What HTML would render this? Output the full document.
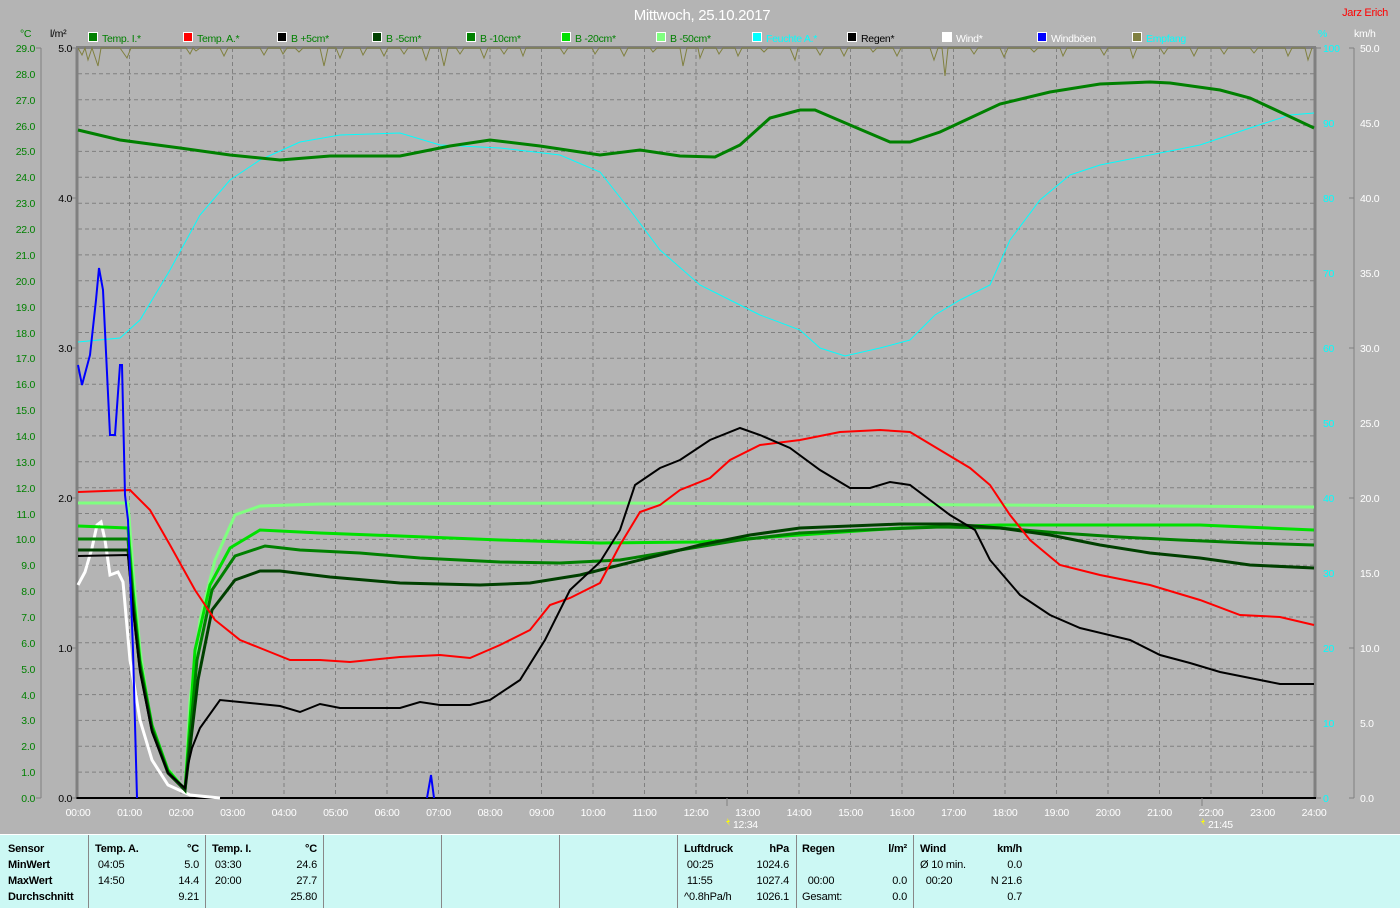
<!DOCTYPE html>
<html><head><meta charset="utf-8"><style>
body{margin:0;background:#b4b4b4;width:1400px;height:907px;overflow:hidden;font-family:"Liberation Sans",sans-serif}
svg{position:absolute;left:0;top:0}
.tb{position:absolute;left:0;top:834px;width:1400px;height:73px;background:#ccf8f4;border-top:1px solid #fff}
.c{position:absolute;font:bold 11px "Liberation Sans",sans-serif;color:#000;top:0;letter-spacing:-0.2px}
.c div{height:16px;line-height:16px;white-space:pre}
.n{font-weight:normal}
.sep{position:absolute;top:0;width:1px;height:73px;background:#888}
</style></head><body>
<svg width="1400" height="907" viewBox="0 0 1400 907" font-family="Liberation Sans, sans-serif" font-size="10.5" letter-spacing="-0.3">
<text x="702" y="20" fill="#fff" font-size="15" text-anchor="middle">Mittwoch, 25.10.2017</text>
<text x="1388" y="16" fill="#f00" font-size="11" text-anchor="end">Jarz Erich</text>
<text x="20" y="37" fill="#008000">°C</text><text x="50" y="37" fill="#000">l/m²</text>
<text x="1318" y="37" fill="#0ff">%</text><text x="1354" y="37" fill="#fff">km/h</text>
<g stroke="#fff" stroke-width="1">
<rect x="88.5" y="32.5" width="9" height="9" fill="#008000"/><rect x="183.5" y="32.5" width="9" height="9" fill="#f00"/>
<rect x="277.5" y="32.5" width="9" height="9" fill="#000"/><rect x="372.5" y="32.5" width="9" height="9" fill="#004000"/>
<rect x="466.5" y="32.5" width="9" height="9" fill="#008000"/><rect x="561.5" y="32.5" width="9" height="9" fill="#00e000"/>
<rect x="656.5" y="32.5" width="9" height="9" fill="#80ff80"/><rect x="752.5" y="32.5" width="9" height="9" fill="#0ff"/>
<rect x="847.5" y="32.5" width="9" height="9" fill="#000"/><rect x="942.5" y="32.5" width="9" height="9" fill="#fff"/>
<rect x="1037.5" y="32.5" width="9" height="9" fill="#00f"/><rect x="1132.5" y="32.5" width="9" height="9" fill="#808040"/>
</g>
<g>
<text x="102" y="42" fill="#008000">Temp. I.*</text><text x="197" y="42" fill="#008000">Temp. A.*</text>
<text x="291" y="42" fill="#008000">B +5cm*</text><text x="386" y="42" fill="#008000">B -5cm*</text>
<text x="480" y="42" fill="#008000">B -10cm*</text><text x="575" y="42" fill="#008000">B -20cm*</text>
<text x="670" y="42" fill="#008000">B -50cm*</text><text x="766" y="42" fill="#0ff">Feuchte A.*</text>
<text x="861" y="42" fill="#000">Regen*</text><text x="956" y="42" fill="#fff">Wind*</text>
<text x="1051" y="42" fill="#fff">Windböen</text><text x="1146" y="42" fill="#0ff">Empfang</text>
</g>
<path stroke="#808080" stroke-dasharray="4,3" fill="none" d="M78 772.1H1314M78 746.3H1314M78 720.4H1314M78 694.6H1314M78 668.7H1314M78 642.8H1314M78 617H1314M78 591.1H1314M78 565.2H1314M78 539.4H1314M78 513.5H1314M78 487.7H1314M78 461.8H1314M78 435.9H1314M78 410.1H1314M78 384.2H1314M78 358.3H1314M78 332.5H1314M78 306.6H1314M78 280.8H1314M78 254.9H1314M78 229H1314M78 203.2H1314M78 177.3H1314M78 151.4H1314M78 125.6H1314M78 99.7H1314M78 73.8H1314
M129.5 48V798M181 48V798M232.5 48V798M284 48V798M335.5 48V798M387 48V798M438.5 48V798M490 48V798M541.5 48V798M593 48V798M644.5 48V798M696 48V798M747.5 48V798M799 48V798M850.5 48V798M902 48V798M953.5 48V798M1005 48V798M1056.5 48V798M1108 48V798M1159.5 48V798M1211 48V798M1262.5 48V798"/>
<path stroke="#808080" stroke-width="3" fill="none" d="M77 48V798M76 47.5H1316M1315 47V798"/>
<path stroke="#000" stroke-width="2" d="M76 798H1316"/>
<path stroke="#808080" d="M41 48V798M1354 48V798M36 48H41M36 798H41M72 48H77M72 198H77M72 348H77M72 498H77M72 648H77M72 798H77M1316 48H1321M1316 798H1321M1349 48H1354M1349 798H1354M1349 198H1354M1349 348H1354M1349 498H1354M1349 648H1354M727 798V806M1202 798V806"/>
<g fill="#008000" text-anchor="end">
<text x="35" y="52">29.0</text><text x="35" y="78">28.0</text><text x="35" y="104">27.0</text><text x="35" y="130">26.0</text><text x="35" y="155">25.0</text><text x="35" y="181">24.0</text><text x="35" y="207">23.0</text><text x="35" y="233">22.0</text><text x="35" y="259">21.0</text><text x="35" y="285">20.0</text><text x="35" y="311">19.0</text><text x="35" y="337">18.0</text><text x="35" y="362">17.0</text><text x="35" y="388">16.0</text><text x="35" y="414">15.0</text><text x="35" y="440">14.0</text><text x="35" y="466">13.0</text><text x="35" y="492">12.0</text><text x="35" y="518">11.0</text><text x="35" y="543">10.0</text><text x="35" y="569">9.0</text><text x="35" y="595">8.0</text><text x="35" y="621">7.0</text><text x="35" y="647">6.0</text><text x="35" y="673">5.0</text><text x="35" y="699">4.0</text><text x="35" y="724">3.0</text><text x="35" y="750">2.0</text><text x="35" y="776">1.0</text><text x="35" y="802">0.0</text>
</g>
<g fill="#000" text-anchor="end"><text x="72" y="52">5.0</text><text x="72" y="202">4.0</text><text x="72" y="352">3.0</text><text x="72" y="502">2.0</text><text x="72" y="652">1.0</text><text x="72" y="802">0.0</text></g>
<g fill="#0ff"><text x="1323" y="52">100</text><text x="1323" y="127">90</text><text x="1323" y="202">80</text><text x="1323" y="277">70</text><text x="1323" y="352">60</text><text x="1323" y="427">50</text><text x="1323" y="502">40</text><text x="1323" y="577">30</text><text x="1323" y="652">20</text><text x="1323" y="727">10</text><text x="1323" y="802">0</text></g>
<g fill="#fff"><text x="1360" y="52">50.0</text><text x="1360" y="127">45.0</text><text x="1360" y="202">40.0</text><text x="1360" y="277">35.0</text><text x="1360" y="352">30.0</text><text x="1360" y="427">25.0</text><text x="1360" y="502">20.0</text><text x="1360" y="577">15.0</text><text x="1360" y="652">10.0</text><text x="1360" y="727">5.0</text><text x="1360" y="802">0.0</text></g>
<g fill="#fff" text-anchor="middle">
<text x="78" y="816">00:00</text><text x="129.5" y="816">01:00</text><text x="181" y="816">02:00</text><text x="232.5" y="816">03:00</text><text x="284" y="816">04:00</text><text x="335.5" y="816">05:00</text><text x="387" y="816">06:00</text><text x="438.5" y="816">07:00</text><text x="490" y="816">08:00</text><text x="541.5" y="816">09:00</text><text x="593" y="816">10:00</text><text x="644.5" y="816">11:00</text><text x="696" y="816">12:00</text><text x="747.5" y="816">13:00</text><text x="799" y="816">14:00</text><text x="850.5" y="816">15:00</text><text x="902" y="816">16:00</text><text x="953.5" y="816">17:00</text><text x="1005" y="816">18:00</text><text x="1056.5" y="816">19:00</text><text x="1108" y="816">20:00</text><text x="1159.5" y="816">21:00</text><text x="1211" y="816">22:00</text><text x="1262.5" y="816">23:00</text><text x="1314" y="816">24:00</text>
</g>
<text x="733" y="828" fill="#fff">12:34</text><text x="1208" y="828" fill="#fff">21:45</text>
<path d="M727 818l3 4h-2l2 4-4-5h2z" fill="#ff0"/><path d="M1202 818l3 4h-2l2 4-4-5h2z" fill="#ff0"/>
<polyline fill="none" stroke="#808040" points="78,48 82,55 85,48 88,60 92,48 98,66 101,48 120,48 127,58 131,48 186,48 190,54 193,48 196,51 200,48 220,48 224,56 228,48 260,48 264,55 268,48 280,48 283,54 287,48 295,48 299,52 303,48 320,48 324,66 328,48 336,48 340,58 344,48 360,48 363,55 367,48 380,48 384,56 388,48 400,48 404,54 408,48 422,48 426,60 430,48 440,48 444,66 448,48 456,48 460,54 464,48 480,48 484,58 488,48 500,48 504,54 508,48 520,48 523,56 526,48 560,48 564,54 568,48 592,48 595,54 599,48 620,48 624,56 628,48 650,48 653,52 657,48 680,48 683,66 687,48 698,48 700,58 704,48 716,48 719,54 723,48 735,48 738,56 742,48 760,48 764,52 768,48 790,48 795,60 798,48 816,48 820,55 824,48 840,48 844,56 848,48 870,48 873,52 877,48 893,48 897,56 901,48 930,48 934,60 938,48 942,48 945,76 948,48 970,48 974,54 978,48 1000,48 1004,57 1008,48 1030,48 1034,52 1038,48 1060,48 1063,56 1067,48 1100,48 1104,55 1108,48 1130,48 1133,58 1137,48 1160,48 1164,54 1168,48 1190,48 1194,56 1198,48 1220,48 1224,54 1228,48 1250,48 1254,53 1258,48 1285,48 1288,56 1292,48 1305,48 1308,60 1312,48"/>
<polyline fill="none" stroke="#0ff" points="78,342 120,338 140,320 170,270 200,215 230,180 260,160 300,142 340,135 400,133 440,145 500,148 560,155 600,172 630,210 660,250 700,285 730,300 760,315 800,330 820,348 845,356 880,348 910,340 935,315 960,300 990,285 1010,240 1040,200 1070,175 1100,165 1150,155 1200,145 1250,128 1290,115 1314,113"/>
<polyline fill="none" stroke="#008000" stroke-width="3" points="78,130 120,140 180,148 230,155 280,160 330,156 400,156 450,146 490,140 540,146 600,155 640,150 680,156 715,157 740,145 770,118 800,110 815,110 850,125 890,142 910,142 940,132 970,118 1000,104 1050,92 1100,84 1150,82 1170,83 1220,90 1250,98 1280,112 1314,128"/>
<polyline fill="none" stroke="#fff" stroke-width="3" points="78,585 85,572 92,548 97,525 101,522 105,540 110,575 118,572 123,582 130,660 140,720 152,760 168,785 190,795 220,798"/>
<polyline fill="none" stroke="#80ff80" stroke-width="3" points="78,503 128,503 133,570 140,650 150,720 165,765 185,790 190,700 200,620 215,560 235,515 260,506 320,504 600,503 1000,505 1314,507"/>
<polyline fill="none" stroke="#00e000" stroke-width="3" points="78,526 128,528 133,590 140,660 152,725 168,770 185,790 195,650 210,585 230,548 260,530 320,533 400,536 500,540 600,543 700,542 800,535 900,528 1000,525 1100,525 1200,525 1314,530"/>
<polyline fill="none" stroke="#008000" stroke-width="3" points="78,539 128,539 133,600 140,665 152,728 168,772 185,790 197,660 212,590 235,556 265,546 300,550 360,553 420,558 500,562 560,563 620,560 680,550 740,540 800,533 860,530 940,527 1000,528 1060,533 1120,537 1180,540 1250,543 1314,545"/>
<polyline fill="none" stroke="#004000" stroke-width="3" points="78,550 128,550 133,605 140,668 152,730 168,773 185,790 198,680 212,610 235,580 260,571 280,571 330,577 400,583 480,585 530,583 580,575 620,565 660,555 700,545 750,535 800,528 850,526 900,524 950,524 1000,528 1050,535 1100,545 1150,553 1200,558 1250,565 1314,568"/>
<polyline fill="none" stroke="#f00" stroke-width="2" points="78,492 130,490 150,510 170,545 195,590 215,620 240,640 270,652 290,660 320,660 350,662 400,657 440,655 470,658 500,645 530,630 550,605 570,598 600,583 620,545 640,512 660,505 680,490 710,478 730,460 760,445 800,440 840,432 880,430 910,432 940,450 970,468 990,485 1010,515 1030,540 1060,565 1100,575 1150,585 1200,600 1240,615 1280,617 1314,625"/>
<polyline fill="none" stroke="#000" stroke-width="2" points="78,556 128,555 133,610 140,672 152,732 168,773 185,788 188,765 192,748 200,728 220,700 250,703 280,706 300,712 320,704 340,708 400,708 420,702 440,705 470,705 490,700 520,680 545,640 570,590 600,562 620,530 635,485 660,468 680,460 710,440 740,428 760,435 790,448 820,470 850,488 870,488 890,482 910,485 930,500 950,515 975,530 990,560 1020,595 1050,615 1080,628 1130,640 1160,655 1190,663 1220,672 1250,678 1280,684 1314,684"/>
<polyline fill="none" stroke="#00f" stroke-width="2" points="78,365 82,385 90,355 96,300 99,268 103,290 110,435 115,435 120,365 122,365 125,495 128,520 133,650 137,798"/>
<polyline fill="none" stroke="#00f" stroke-width="2" points="427,798 431,775 434,798"/>
</svg>
<div class="tb">
<div class="sep" style="left:88px"></div><div class="sep" style="left:205px"></div><div class="sep" style="left:323px"></div><div class="sep" style="left:441px"></div><div class="sep" style="left:559px"></div><div class="sep" style="left:677px"></div><div class="sep" style="left:796px"></div><div class="sep" style="left:913px"></div>
<div class="c" style="left:8px;top:6px"><div>Sensor</div><div>MinWert</div><div>MaxWert</div><div>Durchschnitt</div></div>
<div class="c" style="left:95px;top:6px"><div>Temp. A.</div><div class="n"> 04:05</div><div class="n"> 14:50</div><div></div></div>
<div class="c" style="left:160px;top:6px;width:39px;text-align:right"><div>°C</div><div class="n">5.0</div><div class="n">14.4</div><div class="n">9.21</div></div>
<div class="c" style="left:212px;top:6px"><div>Temp. I.</div><div class="n"> 03:30</div><div class="n"> 20:00</div><div></div></div>
<div class="c" style="left:277px;top:6px;width:40px;text-align:right"><div>°C</div><div class="n">24.6</div><div class="n">27.7</div><div class="n">25.80</div></div>
<div class="c" style="left:684px;top:6px"><div>Luftdruck</div><div class="n"> 00:25</div><div class="n"> 11:55</div><div class="n">^0.8hPa/h</div></div>
<div class="c" style="left:748px;top:6px;width:41px;text-align:right"><div>hPa</div><div class="n">1024.6</div><div class="n">1027.4</div><div class="n">1026.1</div></div>
<div class="c" style="left:802px;top:6px"><div>Regen</div><div></div><div class="n">  00:00</div><div class="n">Gesamt:</div></div>
<div class="c" style="left:866px;top:6px;width:41px;text-align:right"><div>l/m²</div><div></div><div class="n">0.0</div><div class="n">0.0</div></div>
<div class="c" style="left:920px;top:6px"><div>Wind</div><div class="n">Ø 10 min.</div><div class="n">  00:20</div><div></div></div>
<div class="c" style="left:980px;top:6px;width:42px;text-align:right"><div>km/h</div><div class="n">0.0</div><div class="n">N 21.6</div><div class="n">0.7</div></div>
</div>
</body></html>
